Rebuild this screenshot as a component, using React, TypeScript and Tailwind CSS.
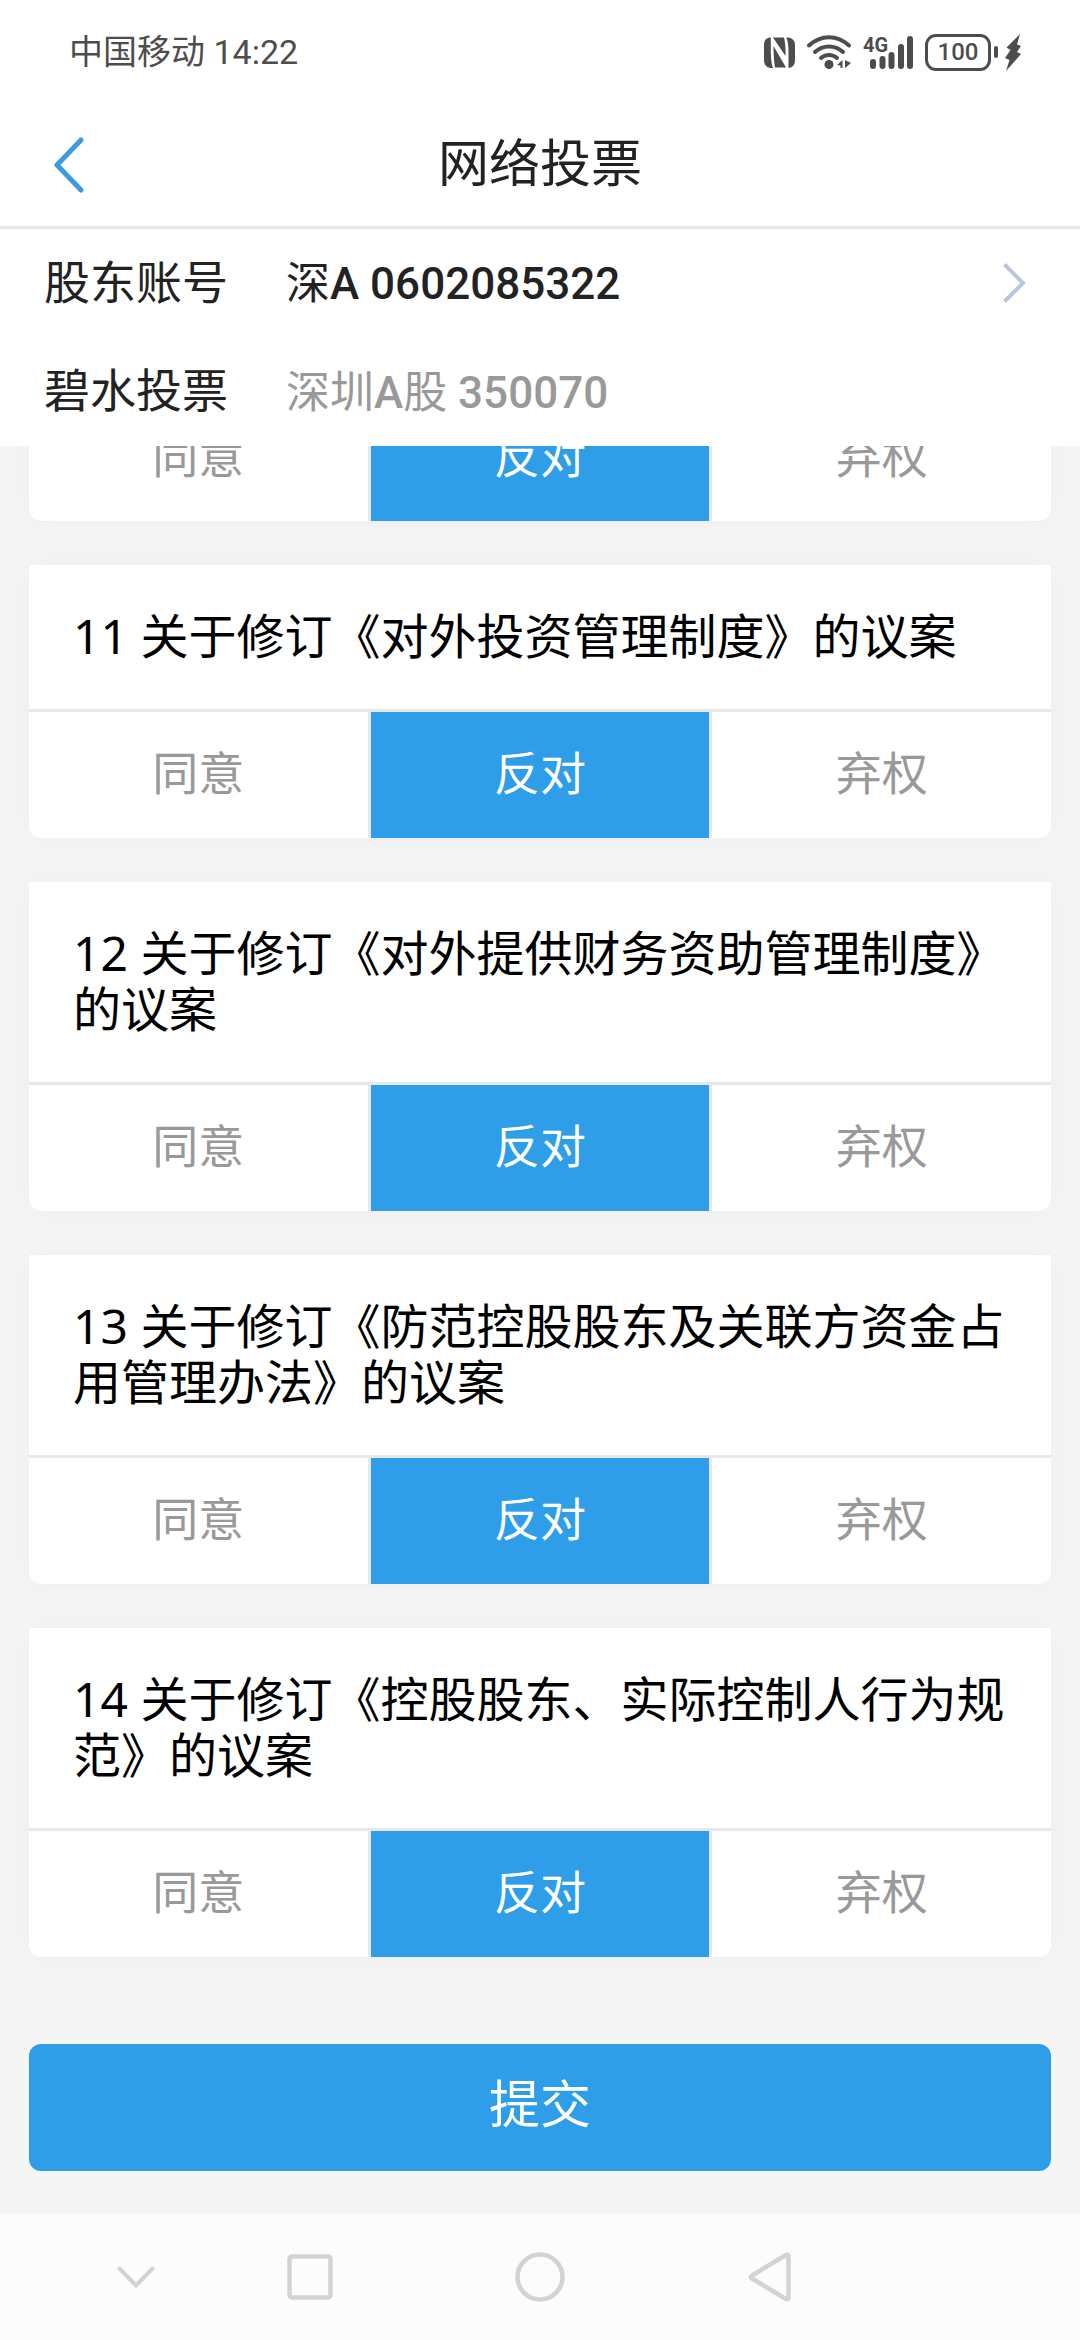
import React, { useState } from "react";

type Vote = "同意" | "反对" | "弃权";

const VOTES: Vote[] = ["同意", "反对", "弃权"];

const PROPOSALS = [
  { id: 11, title: "关于修订《对外投资管理制度》的议案" },
  { id: 12, title: "关于修订《对外提供财务资助管理制度》的议案" },
  { id: 13, title: "关于修订《防范控股股东及关联方资金占用管理办法》的议案" },
  { id: 14, title: "关于修订《控股股东、实际控制人行为规范》的议案" },
];

const StatusBar: React.FC = () => (
  <div className="flex h-[104px] items-center justify-between pr-[59px] pl-[69px] text-[#4d4d4d]">
    <span className="text-[34px]">中国移动 14:22</span>
    <div className="flex items-center gap-3">
      {/* NFC */}
      <svg className="h-[31px] w-[31px]" viewBox="0 0 31 31" fill="currentColor">
        <path d="M6 0.5C2 1 0 3.5 0 8v15c0 4.500 2 7 6 8h3C7.500 27 6.800 20 6.800 13V0.500z" />
        <path d="M9 0.500h11c1 4 1.500 9 1.500 14v4.500L9 0.500z" />
        <path d="M9.500 9l12.500 21.500H11C10 25 9.500 17 9.500 9z" />
        <path d="M22.500 0.500H25c4 1 6 3.500 6 7.500v15c0 4.500-2 7-6 8h-.5V15c0-5-.5-10-2-14.500z" />
      </svg>
      {/* Wi-Fi */}
      <svg className="h-[34px] w-11" viewBox="0 0 44 34" fill="none" stroke="currentColor" strokeWidth="4" strokeLinecap="round">
        <path d="M2 10.500C14 -.5 30 -.5 42 10.500" />
        <path d="M8 17c8-7.500 20-7.500 28 0" />
        <path d="M14 23c4.500-4 11.500-4 16 0" />
        <circle cx="22" cy="29.500" r="4.500" fill="currentColor" stroke="none" />
        <path d="M35.500 25v8h-2v-2.500L30 30zM38 25v8l6-5z" fill="currentColor" stroke="none" />
      </svg>
      {/* Mobile signal */}
      <svg className="h-[34px] w-[50px] overflow-visible" viewBox="0 0 50 34" fill="none" stroke="currentColor" strokeWidth="6" strokeLinecap="round">
        <text x="0" y="17" fill="currentColor" stroke="none" className="text-[20px] font-bold">4G</text>
        <path d="M10 27v4M19.500 24v7M28.500 20v11M38 12v19M47 4v27" />
      </svg>
      {/* Battery */}
      <div className="flex items-center gap-[7px]">
        <div className="flex items-center gap-[3px]">
          <span className="flex h-[37px] w-[66px] items-center justify-center rounded-[11px] border-[3px] border-current text-[24px] leading-none font-medium">100</span>
          <span className="h-3 w-1 rounded-sm bg-current" />
        </div>
        <svg className="h-[37px] w-4" viewBox="0 0 16 37" fill="currentColor">
          <path d="M15 0L1.500 13.500l4 2.500L0 24l4.500 2L1 37l15-17-4-2 4-6-4-1.500z" />
        </svg>
      </div>
    </div>
  </div>
);

const NavBar: React.FC = () => (
  <nav className="grid h-[126px] shrink-0 grid-cols-[195fr_229fr_231fr_229fr_196fr] items-center justify-items-center bg-[#fcfcfc] text-[#d3d3d3]">
    <button aria-label="收起" className="justify-self-end pr-10">
      <svg className="h-[22px] w-[38px]" viewBox="0 0 38 22" fill="none" stroke="currentColor" strokeWidth="4" strokeLinecap="round" strokeLinejoin="round">
        <path d="M2.500 2.500L19 19.500 35.500 2.500" />
      </svg>
    </button>
    <button aria-label="多任务">
      <svg className="h-[46px] w-[46px]" viewBox="0 0 46 46" fill="none" stroke="currentColor" strokeWidth="4.500">
        <rect x="2.500" y="2.500" width="41" height="41" rx="2.500" />
      </svg>
    </button>
    <button aria-label="主页">
      <svg className="h-[50px] w-[50px]" viewBox="0 0 50 50" fill="none" stroke="currentColor" strokeWidth="4.500">
        <circle cx="25" cy="25" r="22.500" />
      </svg>
    </button>
    <button aria-label="返回桌面">
      <svg className="h-[50px] w-[44px]" viewBox="0 0 44 50" fill="none" stroke="currentColor" strokeWidth="4.500" strokeLinejoin="round">
        <path d="M40.500 3.500c-.5-1-1.500-1-2.500-.5L4 23.500c-1.500 1-1.500 2 0 3L38 47c1 .5 2 .5 2.500-.5z" />
      </svg>
    </button>
  </nav>
);

const VoteOptions: React.FC<{ id: number; value: Vote; onChange: (v: Vote) => void }> = ({ id, value, onChange }) => (
  <div role="radiogroup" className="grid grid-cols-3 gap-[3px] bg-[#e8e8e8]">
    {VOTES.map((vote) => (
      <label
        key={vote}
        className={`relative flex h-[126px] cursor-pointer items-center justify-center pb-0.5 text-[46px] ${
          value === vote ? "bg-[#2f9ee9] text-white" : "bg-white text-[#999]"
        }`}
      >
        <input
          type="radio"
          name={`vote-${id}`}
          className="sr-only"
          checked={value === vote}
          onChange={() => onChange(vote)}
        />
        {vote}
      </label>
    ))}
  </div>
);

const App: React.FC = () => {
  const [votes, setVotes] = useState<Record<number, Vote>>({
    10: "反对",
    11: "反对",
    12: "反对",
    13: "反对",
    14: "反对",
  });

  const setVote = (id: number, vote: Vote) => setVotes({ ...votes, [id]: vote });

  return (
    <div className="flex h-screen flex-col bg-[#f5f5f5] font-['Roboto','Noto_Sans_CJK_SC',sans-serif] text-[#222]">
      <header className="shrink-0 border-b-[3px] border-[#e8e8e8] bg-white">
        <StatusBar />
        <div className="grid h-[122px] grid-cols-[1fr_auto_1fr] items-center">
          <button aria-label="返回" className="justify-self-start pl-[53px]">
            <svg className="h-14 w-[31px] text-[#3d9cde]" viewBox="0 0 31 56" fill="none" stroke="currentColor" strokeWidth="5" strokeLinecap="round" strokeLinejoin="round">
              <path d="M28 3L4 28l24 25" />
            </svg>
          </button>
          <h1 className="text-[51px]">网络投票</h1>
        </div>
      </header>

      {/* Account */}
      <div className="shrink-0 bg-white pr-[54px] pl-11">
        <button className="flex h-[108px] w-full items-center text-left">
          <span className="w-[242px] text-[46px]">股东账号</span>
          <span className="flex-1 pt-0.5 text-[44px]">
            深<span className="font-medium">A 0602085322</span>
          </span>
          <svg className="h-10 w-6 text-[#b9c8d8]" viewBox="0 0 24 40" fill="none" stroke="currentColor" strokeWidth="4">
            <path d="M2.500 1.500L21 20 2.500 38.500" />
          </svg>
        </button>
        <div className="flex h-[109px] items-center">
          <span className="w-[242px] text-[46px]">碧水投票</span>
          <span className="flex-1 pt-0.5 text-[44px] text-[#999]">
            深圳<span className="font-medium">A</span>股 <span className="font-medium">350070</span>
          </span>
        </div>
      </div>

      {/* Proposals, scrolled to the end of the list */}
      <main className="flex min-h-0 flex-1 flex-col justify-end gap-11 overflow-hidden px-[29px] pb-[43px]">
        <section className="shrink-0 overflow-hidden rounded-b-xl shadow-[0_0_24px_rgba(0,0,0,0.04)]">
          <VoteOptions id={10} value={votes[10]} onChange={(v) => setVote(10, v)} />
        </section>
        {PROPOSALS.map(({ id, title }) => (
          <section key={id} className="shrink-0 overflow-hidden rounded-b-xl bg-white shadow-[0_0_24px_rgba(0,0,0,0.04)]">
            <h2 className="border-b-[3px] border-[#e8e8e8] px-11 pt-[43px] pb-[45px] font-['Noto_Sans','Noto_Sans_CJK_SC',sans-serif] text-[48px] leading-[56px] text-black">
              {id} {title}
            </h2>
            <VoteOptions id={id} value={votes[id]} onChange={(v) => setVote(id, v)} />
          </section>
        ))}
        <button className="mt-[43px] h-[127px] shrink-0 rounded-xl bg-[#2f9ee9] pb-0.5 text-[51px] text-white">
          提交
        </button>
      </main>

      <NavBar />
    </div>
  );
};

export default App;
